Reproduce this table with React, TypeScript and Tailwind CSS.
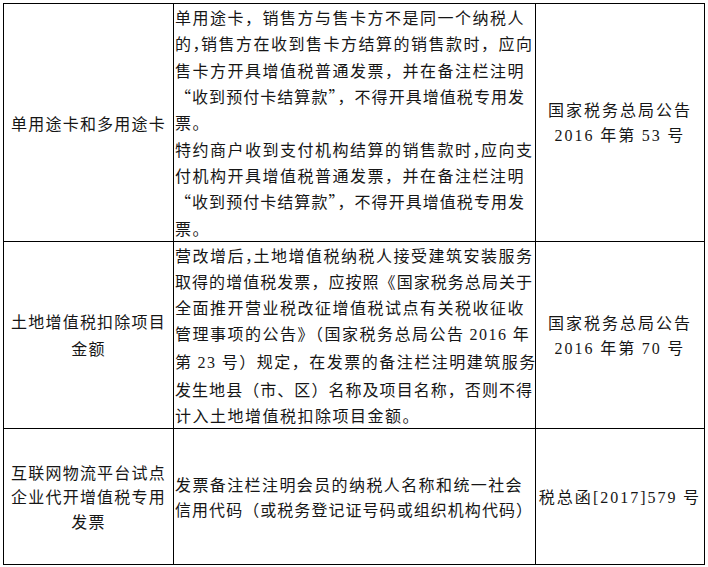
const CJK = "font-['Noto_Sans_CJK_SC',sans-serif]";

function Num({ children }: { children: React.ReactNode }) {
  return <span className="font-['Liberation_Serif','Noto_Sans_CJK_SC',serif]">{children}</span>;
}

// narrow full-width comma, as the source renders some of them
function Nc() {
  return <span className="tracking-[-7.5px]">，</span>;
}

// 21-character lines are set a little tighter to fit the column
function T({ children }: { children: React.ReactNode }) {
  return <span className="tracking-[1.05px]">{children}</span>;
}

function Lines({ lines, className }: { lines: React.ReactNode[]; className?: string }) {
  return (
    <div className={className}>
      {lines.map((l, i) => (
        <div key={i} className="whitespace-nowrap">
          {l}
        </div>
      ))}
    </div>
  );
}

const cell = 'border border-black align-middle p-0';

export default function App() {
  return (
    <div className={`min-h-screen bg-white pl-[3px] pt-[3px] text-[16px] text-[#161616] ${CJK}`}>
      <table className="border-collapse table-fixed w-[702px]">
        <colgroup>
          <col className="w-[170px]" />
          <col className="w-[362px]" />
          <col className="w-[169px]" />
        </colgroup>
        <tbody>
          <tr>
            <td className={`${cell} h-[238px] text-center tracking-[1.2px] leading-[26px]`}>单用途卡和多用途卡</td>
            <td className={`${cell} pl-[1px]`}>
              <Lines
                className="tracking-[1.5px] leading-[26.3px]"
                lines={[
                  '单用途卡，销售方与售卡方不是同一个纳税人',
                  <>的<Nc />销售方在收到售卡方结算的销售款时，应向</>,
                  '售卡方开具增值税普通发票，并在备注栏注明',
                  <T>“收到预付卡结算款”，不得开具增值税专用发</T>,
                  '票。',
                  <>特约商户收到支付机构结算的销售款时<Nc />应向支</>,
                  '付机构开具增值税普通发票，并在备注栏注明',
                  <T>“收到预付卡结算款”，不得开具增值税专用发</T>,
                  '票。',
                ]}
              />
            </td>
            <td className={`${cell} text-center`}>
              <Lines
                className="tracking-[2px] leading-[25px]"
                lines={['国家税务总局公告', <><Num>2016</Num> 年第 <Num>53</Num> 号</>]}
              />
            </td>
          </tr>
          <tr>
            <td className={`${cell} h-[186px] text-center`}>
              <Lines className="tracking-[1.2px] leading-[27px]" lines={['土地增值税扣除项目', '金额']} />
            </td>
            <td className={`${cell} pl-[1px]`}>
              <Lines
                className="tracking-[1.5px] leading-[26px]"
                lines={[
                  <>营改增后<Nc />土地增值税纳税人接受建筑安装服务</>,
                  <T>取得的增值税发票，应按照《国家税务总局关于</T>,
                  '全面推开营业税改征增值税试点有关税收征收',
                  <>管理事项的公告》（国家税务总局公告 <Num>2016</Num> 年</>,
                  <>第 <Num>23</Num> 号）规定，在发票的备注栏注明建筑服务</>,
                  <T>发生地县（市、区）名称及项目名称，否则不得</T>,
                  '计入土地增值税扣除项目金额。',
                ]}
              />
            </td>
            <td className={`${cell} text-center`}>
              <Lines
                className="tracking-[2px] leading-[25px]"
                lines={['国家税务总局公告', <><Num>2016</Num> 年第 <Num>70</Num> 号</>]}
              />
            </td>
          </tr>
          <tr>
            <td className={`${cell} h-[136px] text-center`}>
              <Lines
                className="tracking-[1.2px] leading-[24.5px]"
                lines={['互联网物流平台试点', '企业代开增值税专用', '发票']}
              />
            </td>
            <td className={`${cell} pl-[1px]`}>
              <Lines
                className="tracking-[1.4px] leading-[25px]"
                lines={['发票备注栏注明会员的纳税人名称和统一社会', <T>信用代码（或税务登记证号码或组织机构代码）</T>]}
              />
            </td>
            <td className={`${cell} text-center tracking-[2px]`}>
              税总函<Num>[2017]579</Num> 号
            </td>
          </tr>
        </tbody>
      </table>
    </div>
  );
}
